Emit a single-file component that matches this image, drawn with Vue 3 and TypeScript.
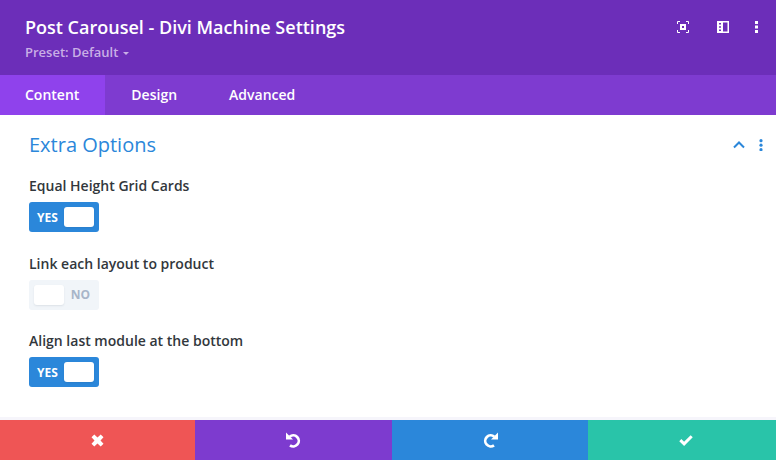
<script setup lang="ts">
const tabs = [
  { label: 'Content', active: true },
  { label: 'Design', active: false },
  { label: 'Advanced', active: false }
]

const options = [
  { label: 'Equal Height Grid Cards', on: true },
  { label: 'Link each layout to product', on: false },
  { label: 'Align last module at the bottom', on: true }
]
</script>

<template>
  <div class="modal">
    <header class="header">
      <div class="header-text">
        <h1 class="title">Post Carousel - Divi Machine Settings</h1>
        <div class="preset">Preset: Default <span class="caret"></span></div>
      </div>
      <div class="header-icons">
        <svg class="icon" width="12" height="12" viewBox="0 0 12 12" fill="none">
          <path d="M.5 3V.5H3M9 .5h2.500V3M11.500 9v2.500H9M3 11.500H.5V9" stroke="#fff" />
          <path fill-rule="evenodd" d="M3 3h6v6H3zM5 5v2h2V5z" fill="#fff" />
        </svg>
        <svg class="icon" width="12" height="12" viewBox="0 0 12 12">
          <path fill-rule="evenodd" d="M0 0h12v12H0zM6 1.500v9h4.500v-9zM2 2v1.500h2V2zM2 5.200v1.600h2V5.200zM2 8.500V10h2V8.500z" fill="#fff" />
        </svg>
        <svg class="icon" width="3" height="12" viewBox="0 0 3 12">
          <path d="M0 0h3v3H0zM0 4.500h3v3H0zM0 9h3v3H0z" fill="#fff" />
        </svg>
      </div>
    </header>

    <nav class="tabs">
      <div v-for="tab in tabs" :key="tab.label" class="tab" :class="{ active: tab.active }">{{ tab.label }}</div>
    </nav>

    <main class="body">
      <div class="section-head">
        <h2 class="section-title">Extra Options</h2>
        <div class="section-icons">
          <svg width="12" height="8" viewBox="0 0 12 8" fill="none">
            <path d="M1 6.500l5-5 5 5" stroke="#2b87da" stroke-width="2" />
          </svg>
          <svg width="4" height="12" viewBox="0 0 4 12">
            <circle cx="2" cy="1.700" r="1.600" fill="#2b87da" />
            <circle cx="2" cy="6.200" r="1.600" fill="#2b87da" />
            <circle cx="2" cy="10.700" r="1.600" fill="#2b87da" />
          </svg>
        </div>
      </div>

      <div v-for="opt in options" :key="opt.label" class="option">
        <label class="option-label">{{ opt.label }}</label>
        <div class="toggle" :class="opt.on ? 'on' : 'off'">
          <span class="toggle-text">{{ opt.on ? 'YES' : 'NO' }}</span>
          <span class="knob"></span>
        </div>
      </div>
    </main>

    <footer class="footer">
      <button class="btn red">
        <svg width="13" height="13" viewBox="0 0 13 13">
          <path d="M3.300.5l3.200 3 3.200-3 2.800 2.800-3 3.200 3 3.200-2.800 2.800-3.200-3-3.200 3-2.800-2.800 3-3.200-3-3.200z" fill="#fff" />
        </svg>
      </button>
      <button class="btn purple">
        <svg width="15" height="16" viewBox="0 0 15 16" fill="none">
          <path d="M3.700 4.700A5.500 5.500 0 1 1 4 13.300" stroke="#fff" stroke-width="2.700" />
          <path d="M0 .5v7h7z" fill="#fff" />
        </svg>
      </button>
      <button class="btn blue">
        <svg width="15" height="16" viewBox="0 0 15 16" fill="none">
          <path d="M11.300 4.700A5.500 5.500 0 1 0 11 13.300" stroke="#fff" stroke-width="2.700" />
          <path d="M15 .5v7H8z" fill="#fff" />
        </svg>
      </button>
      <button class="btn green">
        <svg width="14" height="11" viewBox="0 0 14 11" fill="none">
          <path d="M1.300 5.200l3.800 3.600 7.600-7.500" stroke="#fff" stroke-width="3" />
        </svg>
      </button>
    </footer>
  </div>
</template>

<style>
html,
body {
  margin: 0;
  background: #fff;
}
</style>

<style scoped>
.modal {
  width: 776px;
  height: 460px;
  display: flex;
  flex-direction: column;
  font-family: "Open Sans", "Noto Sans", sans-serif;
  overflow: hidden;
}

.header {
  height: 75px;
  box-sizing: border-box;
  background: #6c2eb9;
  display: flex;
  justify-content: space-between;
  padding: 15px 18px 0 25px;
  flex-shrink: 0;
}

.title {
  margin: 0;
  font-size: 18px;
  line-height: 25px;
  font-weight: 600;
  color: #fff;
}

.preset {
  margin-top: 4px;
  font-size: 13px;
  line-height: 17px;
  font-weight: 600;
  color: #c9afe6;
}

.caret {
  display: inline-block;
  margin-left: 1px;
  vertical-align: 2px;
  border-top: 3px solid #c9afe6;
  border-left: 3px solid transparent;
  border-right: 3px solid transparent;
}

.header-icons {
  display: flex;
  align-items: center;
  height: 24px;
}

.header-icons .icon:nth-child(1) {
  margin-right: 28px;
}

.header-icons .icon:nth-child(2) {
  margin-right: 26px;
}

.tabs {
  height: 40px;
  background: #7e3bd0;
  display: flex;
  flex-shrink: 0;
}

.tab {
  padding: 0 26px;
  font-size: 14px;
  line-height: 40px;
  font-weight: 600;
  color: #fff;
}

.tab.active {
  background: #8f42ec;
  padding: 0 26px 0 25px;
}

.body {
  flex: 1;
  padding: 0 13px 0 29px;
}

.section-head {
  display: flex;
  justify-content: space-between;
  align-items: center;
  height: 59px;
  margin-bottom: 2px;
}

.section-title {
  margin: 0;
  font-size: 20px;
  font-weight: 400;
  color: #2b87da;
}

.section-icons {
  display: flex;
  align-items: center;
  gap: 14px;
}

.option {
  margin-bottom: 21.5px;
}

.option-label {
  display: block;
  font-size: 14px;
  line-height: 20px;
  font-weight: 600;
  color: #32373c;
  margin-bottom: 6px;
}

.toggle {
  width: 70px;
  height: 30px;
  box-sizing: border-box;
  border-radius: 3px;
  padding: 5px;
  display: flex;
  align-items: center;
  justify-content: space-between;
  font-size: 12px;
  font-weight: 700;
}

.toggle.on {
  background: #2b87da;
  color: #fff;
  padding-left: 8px;
}

.toggle.off {
  background: #f1f5f9;
  color: #a8b5c9;
  flex-direction: row-reverse;
  padding-right: 9px;
}

.knob {
  width: 30px;
  height: 20px;
  background: #fff;
  border-radius: 3px;
  box-shadow: 0 1px 2px rgba(43, 56, 80, 0.1);
}

.footer {
  height: 40px;
  display: flex;
  flex-shrink: 0;
  box-shadow: 0 -3px 0 #f6f5fb;
}

.btn {
  border: 0;
  padding: 0;
  display: flex;
  flex-shrink: 0;
  align-items: center;
  justify-content: center;
}

.red {
  width: 195px;
  background: #ef5555;
}

.purple {
  width: 197px;
  background: #7d3bcf;
}

.blue {
  width: 196px;
  background: #2b87da;
}

.green {
  width: 196px;
  background: #29c4a9;
}
</style>
